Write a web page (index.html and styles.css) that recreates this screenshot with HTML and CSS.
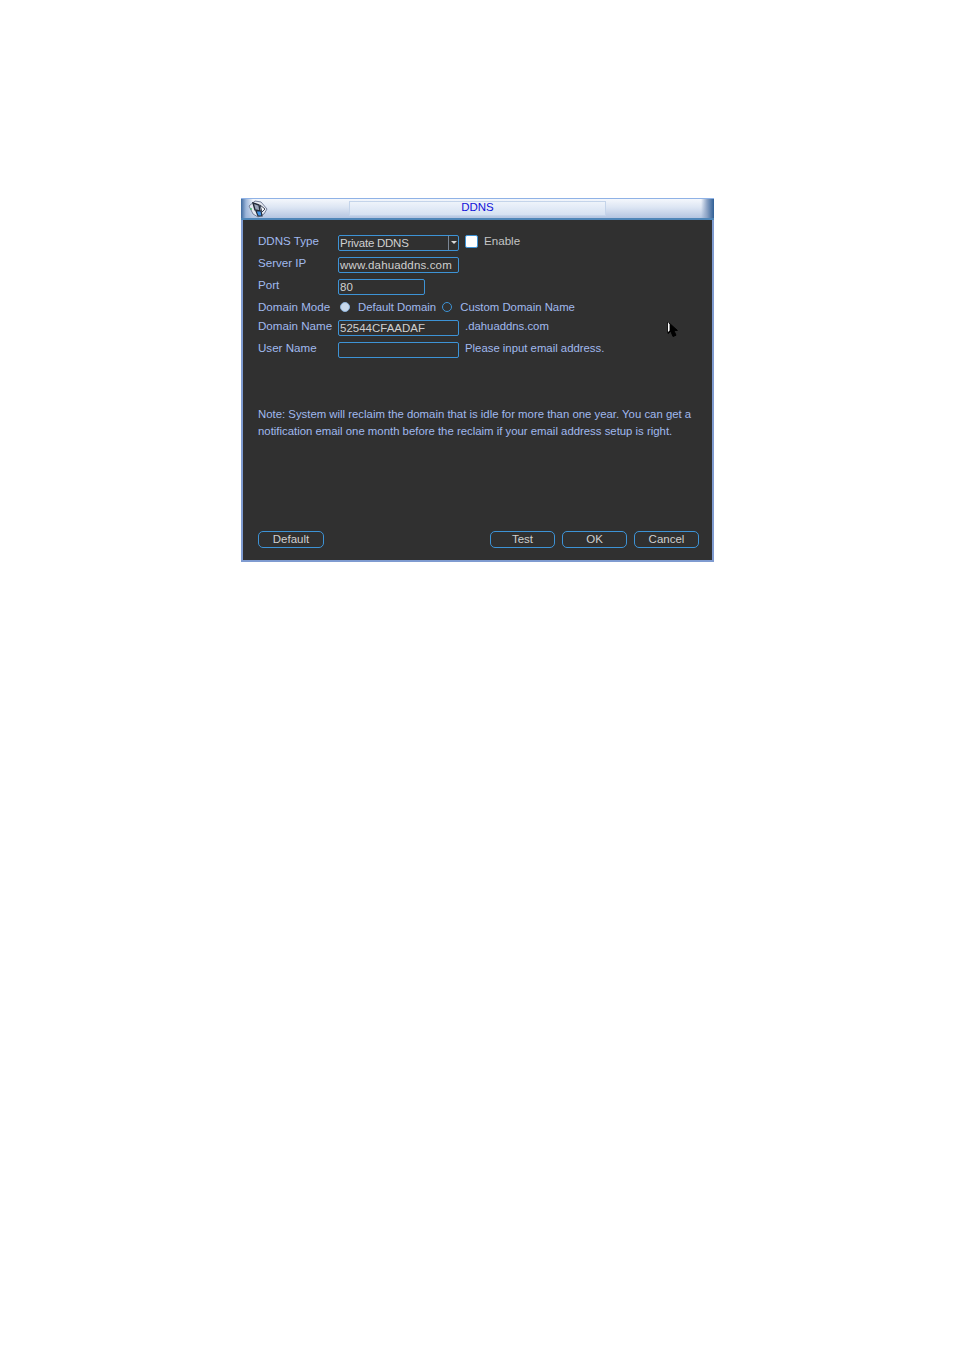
FILE: index.html
```html
<!DOCTYPE html>
<html lang="en">
<head>
<meta charset="utf-8">
<title>DDNS</title>
<link rel="stylesheet" href="styles.css">
</head>
<body>
<div class="window">
  <div class="titlebar">
    <svg class="logo" width="20" height="18" viewBox="0 0 20 18">
      <path d="M1 6 L7 1 L13 2 L19 9 L16 14 L10 17 L5 14 Z" fill="#e6eaf1" stroke="#76809a" stroke-width="1"/>
      <path d="M5 3 L11 5 L12 11 L7 10 Z" fill="#9aa4b8" stroke="#232a38" stroke-width="1.4"/>
      <path d="M8 11 L13 11 L14 16 L10 16 Z" fill="#3f94ea" stroke="#232a38" stroke-width="1.2"/>
      <path d="M12 5 L17 9 L14 12 Z" fill="#fbfcfe" stroke="#3a4356" stroke-width="1"/>
      <circle cx="3" cy="9" r="1" fill="#4cc070"/>
    </svg>
    <div class="title-panel">DDNS</div>
  </div>
  <div class="content">
    <div class="row">
      <span class="label">DDNS Type</span>
      <div class="field select"><span class="select-value">Private DDNS</span><span class="select-arrow"></span></div>
      <span class="checkbox"></span>
      <span class="plain">Enable</span>
    </div>
    <div class="row">
      <span class="label">Server IP</span>
      <div class="field wide-text">www.dahuaddns.com</div>
    </div>
    <div class="row">
      <span class="label">Port</span>
      <div class="field short">80</div>
    </div>
    <div class="row mode">
      <span class="label">Domain Mode</span>
      <span class="radio on"></span>
      <span class="hint default-domain">Default Domain</span>
      <span class="radio"></span>
      <span class="hint custom-domain">Custom Domain Name</span>
    </div>
    <div class="row">
      <span class="label">Domain Name</span>
      <div class="field">52544CFAADAF</div>
      <span class="hint after">.dahuaddns.com</span>
    </div>
    <div class="row">
      <span class="label">User Name</span>
      <div class="field"></div>
      <span class="hint after">Please input email address.</span>
    </div>
    <p class="note">Note: System will reclaim the domain that is idle for more than one year. You can get a notification email one month before the reclaim if your email address setup is right.</p>
    <div class="buttons">
      <button class="btn" type="button">Default</button>
      <div class="btn-group">
        <button class="btn" type="button">Test</button>
        <button class="btn" type="button">OK</button>
        <button class="btn" type="button">Cancel</button>
      </div>
    </div>
  </div>
  <svg class="cursor" width="12" height="17" viewBox="0 0 12 17">
    <path d="M1 1 L1 12.5 L3.8 10.2 L6 15.5 L9 14.2 L6.8 9.4 L10.4 9.4 Z" fill="#000" stroke="#000" stroke-width="1"/>
    <path d="M1 1 L1 11 L2.6 9.6 L2.6 3.4 Z" fill="#fff"/>
  </svg>
</div>
</body>
</html>
```
FILE: styles.css
```css
* { box-sizing: border-box; }
html, body { margin: 0; padding: 0; background: #fff; }
body { height: 1350px; overflow: hidden; font-family: "Liberation Sans", Arial, sans-serif; font-size: 11.5px; }
.window {
  position: relative;
  width: 473px;
  height: 364px;
  margin: 198px 0 0 241px;
  background: #303030;
  border: 2px solid #7f9bd0;
  border-top: 0;
}
.titlebar {
  display: flex;
  align-items: center;
  height: 22px;
  margin: 0 -2px;
  padding-left: 7px;
  border-top: 1px solid #8fb2e6;
  border-bottom: 2px solid #4f86b8;
  background:
    linear-gradient(90deg, #3f6a9f 0, #9db6da 5px, rgba(255,255,255,0) 12px, rgba(255,255,255,0) 460px, #8ba2c4 466px, #2f5f96 473px),
    linear-gradient(180deg, #f4f7fc 0, #dce5f3 45%, #b4c5e1 100%);
}
.logo { flex: none; width: 20px; height: 18px; }
.title-panel {
  width: 257px;
  height: 15px;
  margin-left: 81px;
  border: 1px solid #c4d4ea;
  background: linear-gradient(180deg, #eef3fa, #d5e1f2);
  color: #1212d8;
  font-size: 11.5px;
  line-height: 11px;
  text-align: center;
}
.content { position: relative; height: 340px; padding: 15px 14px 0 15px; }
.row { display: flex; align-items: center; height: 16px; margin-bottom: 6px; }
.row.mode { height: 13px; padding-bottom: 1px; }
.label { flex: none; width: 80px; padding-bottom: 5px; color: #a0b9ee; font-size: 11.6px; line-height: 14px; white-space: nowrap; }
.mode .label { padding-bottom: 0; }
.field {
  flex: none;
  width: 121px;
  height: 16px;
  padding: 0 1px;
  border: 1px solid #3d93d6;
  border-radius: 2px;
  color: #cfcfcf;
  font-size: 11.5px;
  line-height: 15px;
  white-space: nowrap;
  overflow: hidden;
}
.wide-text { letter-spacing: 0.15px; }
.field.short { width: 87px; }
.select { display: flex; padding-right: 0; }
.select-value { flex: 1; letter-spacing: -0.25px; }
.select-arrow { position: relative; flex: none; width: 10px; border-left: 1px solid #7a8694; }
.select-arrow::after {
  content: "";
  position: absolute;
  left: 2px;
  top: 5px;
  border: 3px solid transparent;
  border-top-color: #d8d8d8;
}
.checkbox { flex: none; width: 13px; height: 13px; margin: -3px 0 0 6px; background: #fff; border: 1px solid #3d93d6; border-radius: 2px; }
.plain { margin: -5px 0 0 6px; color: #c4c4c4; font-size: 11.6px; }
.radio { flex: none; width: 10px; height: 10px; margin-left: 2px; border: 1.5px solid #3d93d6; border-radius: 50%; }
.radio.on { background: #c8d8ea; border-color: #8eb4dc; }
.hint { color: #a0b9ee; font-size: 11.35px; white-space: nowrap; }
.default-domain { margin-left: 8px; }
.custom-domain { margin-left: 8px; }
.default-domain + .radio { margin-left: 6px; }
.after { margin: -5px 0 0 6px; }
.note {
  width: 442px;
  margin: 48px 0 0;
  color: #a0b9ee;
  font-size: 11.37px;
  line-height: 17px;
}
.buttons { display: flex; justify-content: space-between; width: 441px; margin-top: 91px; }
.btn-group { display: flex; gap: 7px; }
.btn {
  width: 66px;
  height: 17px;
  padding: 0;
  border: 1.5px solid #3d93d6;
  border-radius: 5px;
  background: #303030;
  color: #cfcfcf;
  font: 11.5px/13px "Liberation Sans", Arial, sans-serif;
}
.btn-group .btn { width: 65px; }
.cursor { position: absolute; left: 424px; top: 123px; }
```
